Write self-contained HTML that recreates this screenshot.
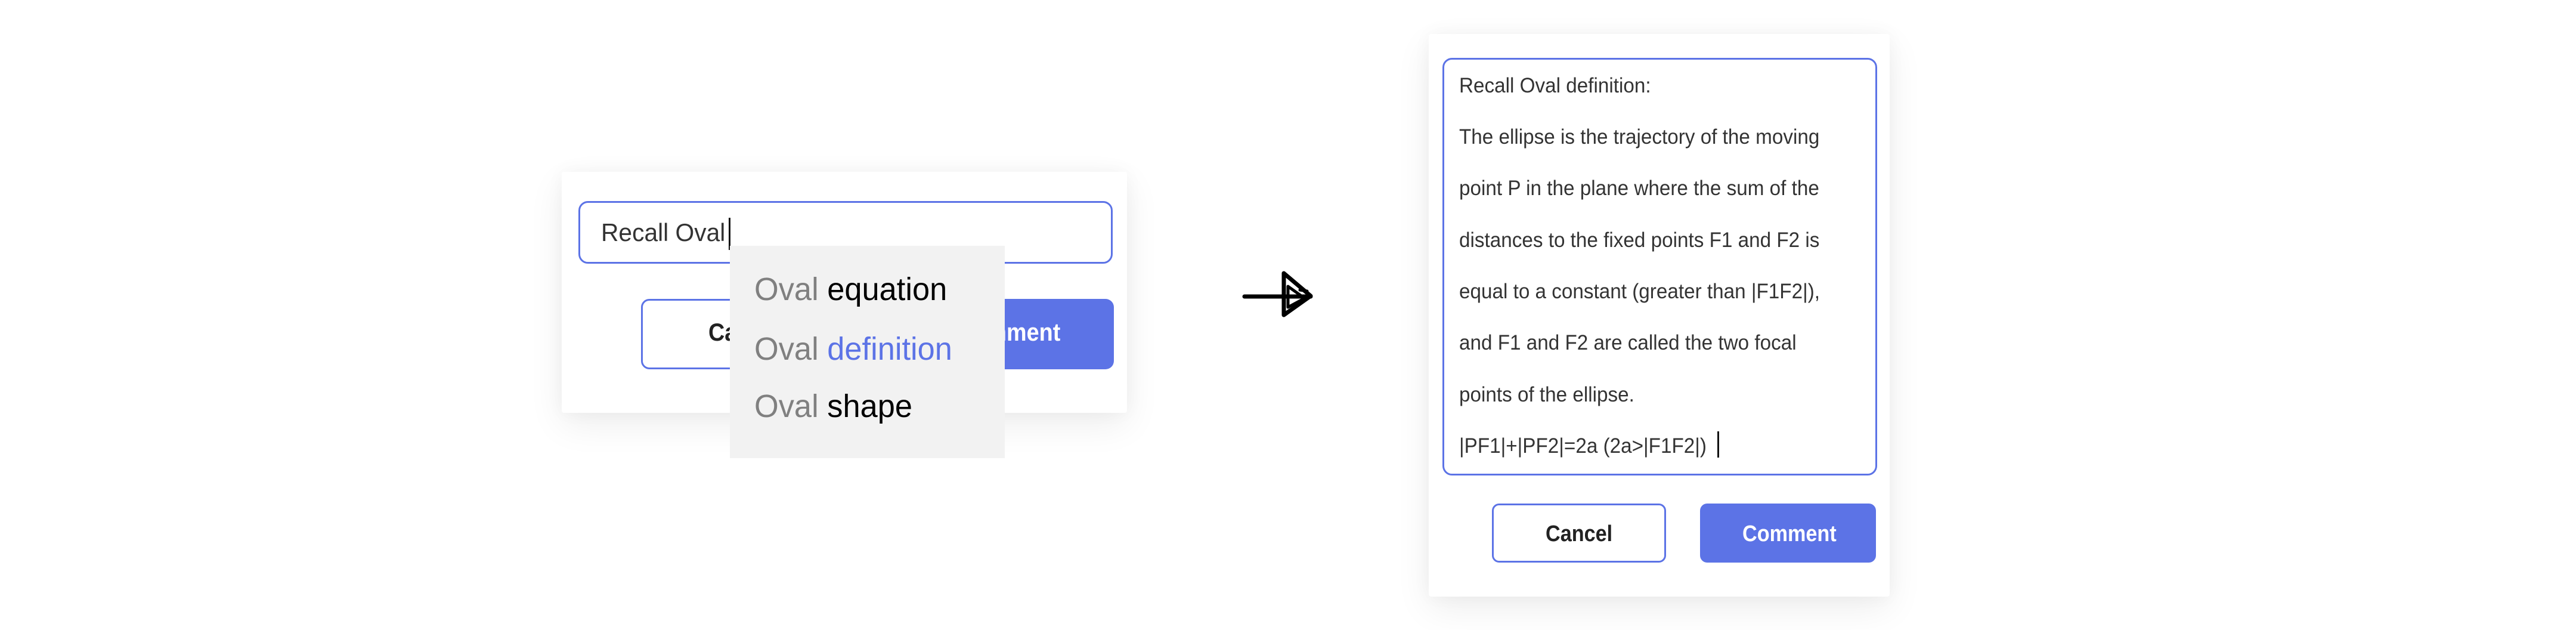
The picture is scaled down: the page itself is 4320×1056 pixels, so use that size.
<!DOCTYPE html>
<html><head><meta charset="utf-8"><style>
html,body{margin:0;padding:0;background:#fff;width:4320px;height:1056px;overflow:hidden;position:relative;font-family:"Liberation Sans",sans-serif}
.abs{position:absolute}
.card{position:absolute;background:#fff;box-shadow:0 20px 60px rgba(0,0,0,0.07),0 0 30px rgba(0,0,0,0.04)}
.sx{display:inline-block;transform:scaleX(0.97);transform-origin:left center;white-space:nowrap}
.sb{display:inline-block;transform:scaleX(0.9);transform-origin:left center;white-space:nowrap}
.line{position:absolute;left:2447px;font-size:35px;color:#333;white-space:nowrap;line-height:40px}
.line .sx{transform:scaleX(0.95)}
</style></head><body>

<!-- left card -->
<div class="card" style="left:942px;top:288px;width:948px;height:404px;border-radius:4px"></div>
<div class="abs" style="left:970px;top:337px;width:896px;height:105px;border:3px solid #5c73e6;border-radius:16px;box-sizing:border-box"></div>
<div class="abs" style="left:1008px;top:366px;font-size:42px;line-height:48px;color:#333"><span class="sx">Recall Oval</span></div>
<div class="abs" style="left:1222px;top:365px;width:3px;height:54px;background:#111"></div>

<div class="abs" style="left:1075px;top:501px;width:450px;height:118px;border:3px solid #5c73e6;border-radius:14px;box-sizing:border-box;background:#fff"></div>
<div class="abs" style="left:1188px;top:532px;font-size:42px;line-height:50px;color:#222;font-weight:bold"><span class="sb">Cancel</span></div>
<div class="abs" style="left:1420px;top:501px;width:448px;height:118px;border-radius:14px;background:#5c73e6"></div>
<div class="abs" style="left:1604px;top:532px;font-size:42px;line-height:50px;color:#fff;font-weight:bold"><span class="sb">Comment</span></div>

<div class="abs" style="left:1224px;top:412px;width:461px;height:356px;background:#f2f2f2"></div>
<div class="abs" style="left:1265px;top:455px;font-size:54px;line-height:60px;color:#000"><span class="sx"><span style="color:#808080">Oval</span> equation</span></div>
<div class="abs" style="left:1265px;top:555px;font-size:54px;line-height:60px;color:#5c73e6"><span class="sx"><span style="color:#808080">Oval</span> definition</span></div>
<div class="abs" style="left:1265px;top:651px;font-size:54px;line-height:60px;color:#000"><span class="sx"><span style="color:#808080">Oval</span> shape</span></div>

<!-- arrow -->
<svg class="abs" style="left:2070px;top:440px" width="160" height="110" viewBox="0 0 160 110">
<g fill="none" stroke="#000" stroke-width="7" stroke-linecap="round" stroke-linejoin="round">
<path d="M17 57 L128 57"/>
<path d="M83 18 L83 88 M83 18 L128 56 L83 88"/>
<path d="M90 40 L90 75 L118 60 Z" stroke-width="5"/>
<path d="M110 46 L122 48" stroke-width="5"/>
</g></svg>

<!-- right card -->
<div class="card" style="left:2396px;top:57px;width:773px;height:943px;border-radius:4px"></div>
<div class="abs" style="left:2419px;top:97px;width:729px;height:700px;border:3px solid #5c73e6;border-radius:16px;box-sizing:border-box"></div>
<div class="line" style="top:124px"><span class="sx">Recall Oval definition:</span></div>
<div class="line" style="top:210px"><span class="sx">The ellipse is the trajectory of the moving</span></div>
<div class="line" style="top:296px"><span class="sx">point P in the plane where the sum of the</span></div>
<div class="line" style="top:383px"><span class="sx">distances to the fixed points F1 and F2 is</span></div>
<div class="line" style="top:469px"><span class="sx">equal to a constant (greater than |F1F2|),</span></div>
<div class="line" style="top:555px"><span class="sx">and F1 and F2 are called the two focal</span></div>
<div class="line" style="top:642px"><span class="sx">points of the ellipse.</span></div>
<div class="line" style="top:728px"><span class="sx">|PF1|+|PF2|=2a (2a&gt;|F1F2|)</span></div>
<div class="abs" style="left:2880px;top:723px;width:3px;height:44px;background:#111"></div>

<div class="abs" style="left:2502px;top:844px;width:292px;height:99px;border:3px solid #5c73e6;border-radius:12px;box-sizing:border-box"></div>
<div class="abs" style="left:2592px;top:873px;font-size:38px;line-height:44px;color:#222;font-weight:bold"><span class="sb">Cancel</span></div>
<div class="abs" style="left:2851px;top:844px;width:295px;height:99px;border-radius:12px;background:#5c73e6"></div>
<div class="abs" style="left:2922px;top:873px;font-size:38px;line-height:44px;color:#fff;font-weight:bold"><span class="sb">Comment</span></div>

</body></html>
